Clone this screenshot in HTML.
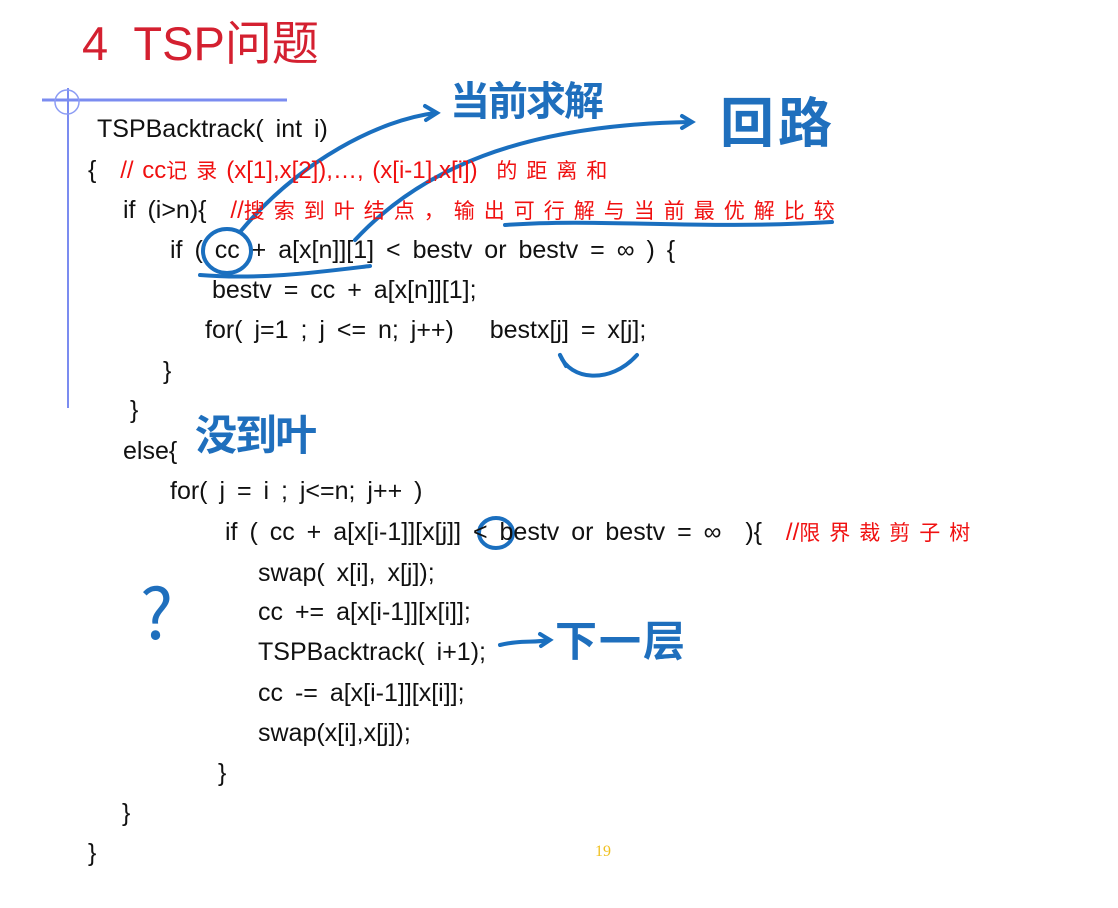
<!DOCTYPE html>
<html><head><meta charset="utf-8">
<style>
html,body{margin:0;padding:0;background:#fff;}
body{width:1118px;height:908px;position:relative;overflow:hidden;font-family:"Liberation Sans","Noto Sans CJK SC",sans-serif;}
.l{position:absolute;font-size:25px;color:#111;white-space:pre;line-height:1;word-spacing:5px;}
.r{color:#f01010;font-size:24px;word-spacing:2px;}
.c{color:#f01010;font-size:21px;letter-spacing:9px;font-family:"Noto Sans CJK SC",sans-serif;}
.t{position:absolute;left:82px;top:20px;font-size:47px;color:#d42030;white-space:pre;line-height:1;}
.h{position:absolute;color:#1f6fbd;font-weight:bold;font-family:"WenQuanYi Zen Hei","Noto Sans CJK SC",sans-serif;white-space:pre;line-height:1;word-spacing:0;}
</style></head><body>
<div class="t">4  TSP问题</div>
<svg width="1118" height="908" style="position:absolute;left:0;top:0">
<line x1="42" y1="100" x2="287" y2="100" stroke="#7b8cf0" stroke-width="3"/>
<line x1="68" y1="88" x2="68" y2="408" stroke="#7b8cf0" stroke-width="2"/>
<circle cx="67" cy="102" r="12" fill="none" stroke="#8c9cf4" stroke-width="1.5"/>
<g fill="none" stroke="#1a6fbf" stroke-width="4" stroke-linecap="round">
<path d="M240 232 C300 160 380 120 435 113"/>
<path d="M425 106 L437 113 L426 120"/>
<path d="M355 240 C420 170 520 125 690 122"/>
<path d="M682 116 L692 122 L682 128"/>
<ellipse cx="227" cy="251" rx="24" ry="22"/>
<path d="M200 275 C260 280 320 272 370 266"/>
<path d="M505 225 C600 218 700 230 832 222"/>
<ellipse cx="496" cy="533" rx="17" ry="15"/>
<path d="M560 355 C570 380 610 385 637 355"/>
<path d="M560 355 L566 366"/>
<path d="M500 645 C520 640 535 643 548 640"/>
<path d="M540 634 L550 640 L541 646"/>
</g>
</svg>
<div class="h" style="left:450px;top:78px;font-size:40px;letter-spacing:-2px">当前求解</div>
<div class="h" style="left:720px;top:92px;font-size:54px;letter-spacing:4px">回路</div>
<div class="h" style="left:195px;top:412px;font-size:42px;letter-spacing:-2px">没到叶</div>
<div class="h" style="left:555px;top:618px;font-size:42px;letter-spacing:2px">下一层</div>
<div class="h" style="left:140px;top:575px;font-size:70px;font-weight:normal">?</div>

<div class="l" style="left:97px;top:117px">TSPBacktrack( int i)</div>
<div class="l" style="left:88px;top:158px">{  <span class="r">// cc</span><span class="c">记录</span><span class="r">(x[1],x[2]),…, (x[i-1],x[i])</span><span class="c"> 的距离和</span></div>
<div class="l" style="left:123px;top:198px">if (i&gt;n){  <span class="r">//</span><span class="c">搜索到叶结点，输出可行解与当前最优解比较</span></div>
<div class="l" style="left:170px;top:238px">if ( cc + a[x[n]][1] &lt; bestv or bestv = ∞ ) {</div>
<div class="l" style="left:212px;top:278px">bestv = cc + a[x[n]][1];</div>
<div class="l" style="left:205px;top:318px">for( j=1 ; j &lt;= n; j++)   bestx[j] = x[j];</div>
<div class="l" style="left:163px;top:359px">}</div>
<div class="l" style="left:130px;top:398px">}</div>
<div class="l" style="left:123px;top:439px">else{</div>
<div class="l" style="left:170px;top:479px">for( j = i ; j&lt;=n; j++ )</div>
<div class="l" style="left:225px;top:520px">if ( cc + a[x[i-1]][x[j]] &lt; bestv or bestv = ∞  ){  <span class="r">//</span><span class="c">限界裁剪子树</span></div>
<div class="l" style="left:258px;top:561px">swap( x[i], x[j]);</div>
<div class="l" style="left:258px;top:600px">cc += a[x[i-1]][x[i]];</div>
<div class="l" style="left:258px;top:640px">TSPBacktrack( i+1);</div>
<div class="l" style="left:258px;top:681px">cc -= a[x[i-1]][x[i]];</div>
<div class="l" style="left:258px;top:721px">swap(x[i],x[j]);</div>
<div class="l" style="left:218px;top:761px">}</div>
<div class="l" style="left:122px;top:801px">}</div>
<div class="l" style="left:88px;top:841px">}</div>
<div style="position:absolute;left:595px;top:843px;font-family:'Liberation Serif',serif;font-size:16px;color:#f0c020">19</div>
</body></html>
